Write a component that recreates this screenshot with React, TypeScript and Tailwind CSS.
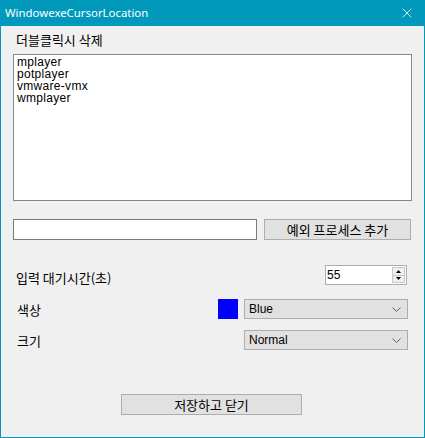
import { X } from "lucide-react";

const items = ["mplayer", "potplayer", "vmware-vmx", "wmplayer"];

const ko = "font-['Noto_Sans_CJK_KR',sans-serif] text-[13px] leading-[15px]";

function Chevron() {
  return (
    <svg width="9" height="5" viewBox="0 0 9 5" className="shrink-0">
      <polyline points="0.5,0.5 4.5,4.5 8.5,0.5" fill="none" stroke="#606060" strokeWidth="1" />
    </svg>
  );
}

function Combo({ value }: { value: string }) {
  return (
    <div className="flex h-[20px] w-[164px] items-center justify-between border border-[#adadad] bg-[#e1e1e1] pl-[4px] pr-[6px]">
      <span>{value}</span>
      <Chevron />
    </div>
  );
}

export default function App() {
  return (
    <div className="flex h-[438px] w-[425px] flex-col bg-[#0099bc] px-px pb-px font-['Liberation_Sans','Noto_Sans_CJK_KR',sans-serif] text-[12px] leading-[14px] text-black">
      <div className="flex h-[26px] shrink-0 items-center justify-between pl-[4px] pr-[9px] font-['Noto_Sans',sans-serif] text-[11.4px] text-white">
        <span>WindowexeCursorLocation</span>
        <X size={16} strokeWidth={1.2} />
      </div>

      <div className="flex flex-1 flex-col bg-[#f0f0f0] pl-[12px]">
        <p className={`mt-[6px] pl-[3px] ${ko}`}>더블클릭시 삭제</p>

        <div className="mt-[7px] h-[147px] w-[399px] border border-[#828790] bg-white pl-[3px] pt-px leading-[12px] tracking-[0.3px]">
          {items.map((item) => (
            <div key={item} className="h-[12px]">{item}</div>
          ))}
        </div>

        <div className="mt-[18px] flex items-center gap-[7px]">
          <div className="h-[21px] w-[244px] border border-[#7a7a7a] bg-white" />
          <button className={`flex h-[21px] w-[147px] items-center justify-center border border-[#adadad] bg-[#e1e1e1] ${ko}`}>
            예외 프로세스 추가
          </button>
        </div>

        <div className="mt-[25px] flex h-[20px] w-[394px] items-center justify-between">
          <span className={`mt-[4px] pl-[3px] ${ko}`}>입력 대기시간(초)</span>
          <div className="flex h-[20px] w-[82px] items-center justify-between border border-[#adadad] bg-white pl-[1px] pr-px">
            <span>55</span>
            <div className="flex h-[16px] w-[13px] flex-col border border-[#c8c8c8] bg-[#f0f0f0]">
              <div className="flex flex-1 items-center justify-center">
                <svg width="5" height="3" viewBox="0 0 5 3"><polygon points="2.5,0 5,3 0,3" fill="#000" /></svg>
              </div>
              <div className="h-px bg-[#c8c8c8]" />
              <div className="flex flex-1 items-center justify-center">
                <svg width="5" height="3" viewBox="0 0 5 3"><polygon points="0,0 5,0 2.5,3" fill="#000" /></svg>
              </div>
            </div>
          </div>
        </div>

        <div className="mt-[14px] flex h-[20px] w-[395px] items-center">
          <span className={`flex-1 pl-[4px] ${ko}`}>색상</span>
          <div className="mr-[6px] h-[20px] w-[20px] bg-[#0000ff]" />
          <Combo value="Blue" />
        </div>

        <div className="mt-[11px] flex h-[20px] w-[395px] items-center">
          <span className={`flex-1 pl-[4px] ${ko}`}>크기</span>
          <Combo value="Normal" />
        </div>

        <button className={`ml-[108px] mt-[44px] flex h-[21px] w-[181px] items-center justify-center border border-[#adadad] bg-[#e1e1e1] ${ko}`}>
          저장하고 닫기
        </button>
      </div>
    </div>
  );
}
